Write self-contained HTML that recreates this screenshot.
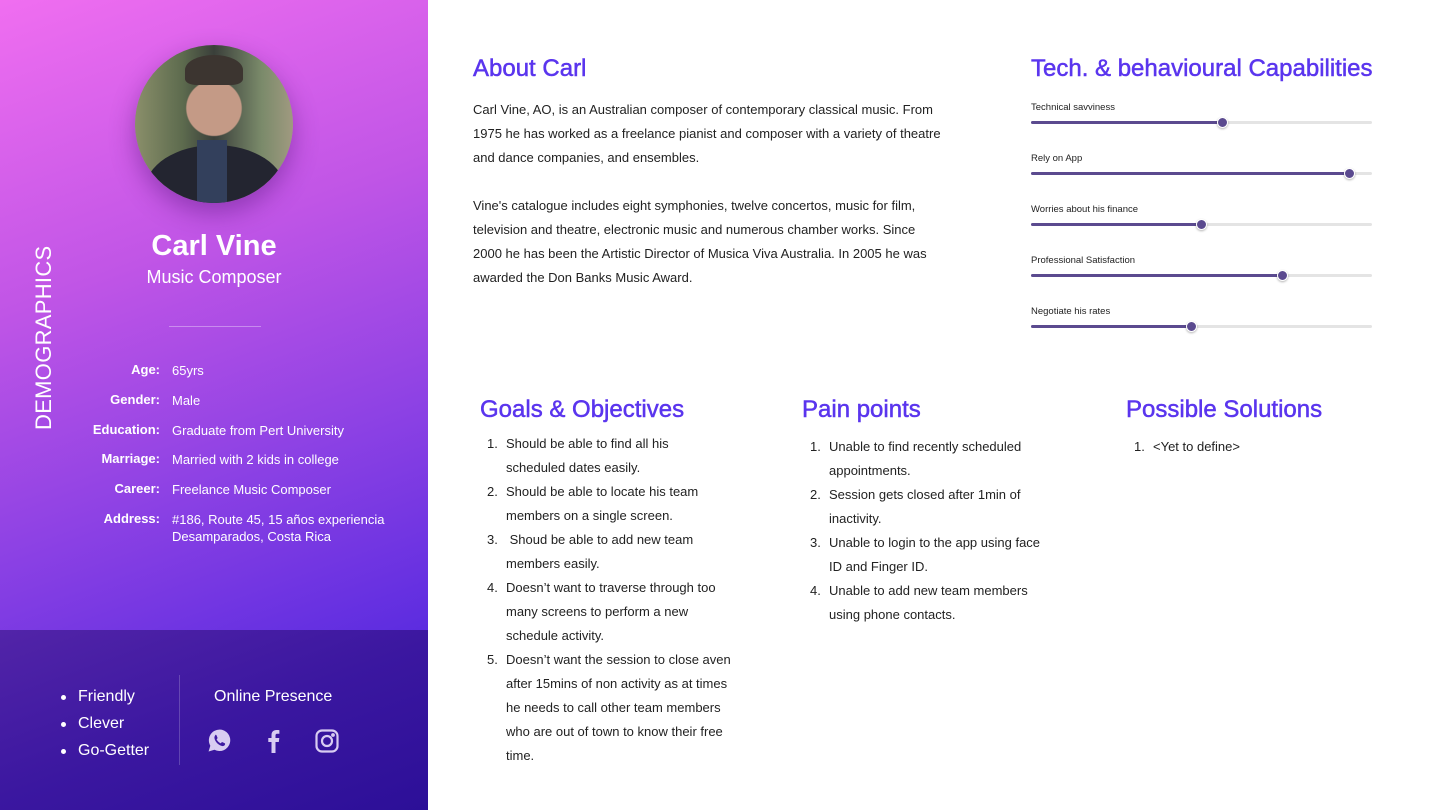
<!DOCTYPE html>
<html><head><meta charset="utf-8"><style>
*{margin:0;padding:0;box-sizing:border-box}
body{width:1440px;height:810px;position:relative;overflow:hidden;background:#fff;font-family:"Liberation Sans",sans-serif;color:#222}
.left{position:absolute;left:0;top:0;width:428px;height:630px;background:linear-gradient(160deg,#f06ef0 0%,#c055e6 40%,#8e42e4 70%,#5c2ce0 100%)}
.bot{position:absolute;left:0;top:630px;width:428px;height:180px;background:linear-gradient(160deg,#5224a8 0%,#3b17a0 50%,#2c0f98 100%)}
.photo{position:absolute;left:135px;top:45px;width:158px;height:158px;border-radius:50%;overflow:hidden;background:radial-gradient(circle at 50% 40%,#c49a86 0 22%,transparent 23%),linear-gradient(90deg,#8a8f6a,#5d6b4e 30%,#3a3f3a 50%,#7a8a6a 80%,#a09a80);box-shadow:0 10px 25px rgba(80,20,120,.45)}
.photo .body{position:absolute;left:10px;top:100px;width:140px;height:90px;border-radius:50% 50% 0 0;background:#232530}
.photo .shirt{position:absolute;left:62px;top:95px;width:30px;height:70px;background:#33405c}
.photo .hair{position:absolute;left:50px;top:10px;width:58px;height:30px;border-radius:50% 50% 20% 20%;background:#3c3530}
.name{position:absolute;left:0;width:428px;top:230px;text-align:center;color:#fff;font-weight:bold;font-size:29px}
.role{position:absolute;left:0;width:428px;top:267px;text-align:center;color:#fff;font-size:18px}
.hr{position:absolute;left:169px;top:326px;width:92px;height:1px;background:rgba(255,255,255,.35)}
.demo{position:absolute;left:31px;top:430px;transform-origin:0 0;transform:rotate(-90deg);color:#fff;font-size:22px;letter-spacing:.3px;white-space:nowrap}
.row{position:absolute;left:60px;font-size:13px;color:#fff}
.row b{display:inline-block;width:100px;text-align:right;margin-right:12px;font-size:13px}
.row span{display:inline-block;vertical-align:top;line-height:17px}
.traits{position:absolute;left:60px;top:688px;color:#fff;font-size:16px;list-style:none}
.traits li{height:27px;position:relative;padding-left:18px}
.traits li:before{content:"";position:absolute;left:1px;top:7px;width:5px;height:5px;border-radius:50%;background:#fff}
.vl{position:absolute;left:179px;top:675px;width:1px;height:90px;background:rgba(255,255,255,.2)}
.op{position:absolute;left:214px;top:688px;color:#fff;font-size:16px}
h2{position:absolute;color:#5a35ee;font-weight:normal;font-size:24px;white-space:nowrap;-webkit-text-stroke:.5px #5a35ee}
p.t{position:absolute;font-size:13px;line-height:24px;color:#222}
ol{position:absolute;font-size:13px;line-height:24px;color:#222;padding-left:0;list-style:none}
ol li{position:relative;padding-left:26px}
ol li i{position:absolute;left:7px;font-style:normal}
.sl{position:absolute;left:1031px;width:341px}
.sl div.l{font-size:9.5px;color:#222}
.sl .tr{position:absolute;top:19px;left:0;width:341px;height:3px;border-radius:2px;background:#e4e4e4}
.sl .f{position:absolute;top:19px;left:0;height:3px;border-radius:2px;background:#5b4a8f}
.sl .k{position:absolute;top:15px;width:11px;height:11px;border-radius:50%;background:#5b4a8f;border:1.5px solid #fff;box-shadow:0 1px 2px rgba(0,0,0,.3);margin-left:-5px}
</style></head><body>
<div class="left"></div>
<div class="photo"><div class="hair"></div><div class="body"></div><div class="shirt"></div></div>
<div class="name">Carl Vine</div>
<div class="role">Music Composer</div>
<div class="hr"></div>
<div class="demo">DEMOGRAPHICS</div>
<div class="row" style="top:362px"><b>Age:</b><span>65yrs</span></div>
<div class="row" style="top:392px"><b>Gender:</b><span>Male</span></div>
<div class="row" style="top:422px"><b>Education:</b><span>Graduate from Pert University</span></div>
<div class="row" style="top:451px"><b>Marriage:</b><span>Married with 2 kids in college</span></div>
<div class="row" style="top:481px"><b>Career:</b><span>Freelance Music Composer</span></div>
<div class="row" style="top:511px"><b>Address:</b><span>#186, Route 45, 15 años experiencia<br>Desamparados, Costa Rica</span></div>
<div class="bot"></div>
<ul class="traits"><li>Friendly</li><li>Clever</li><li>Go-Getter</li></ul>
<div class="vl"></div>
<div class="op">Online Presence</div>
<svg style="position:absolute;left:207px;top:728px" width="25" height="25" viewBox="0 0 24 24"><path fill="#d8ccf2" d="M12 1.5A10.3 10.3 0 0 0 3.2 17L1.5 22.5 7.2 20.9A10.3 10.3 0 1 0 12 1.5z"/><path fill="#3e1aa2" d="M8.2 6.5c.4 0 .7 0 .9.5l1 2.3c.1.3 0 .5-.2.8l-.7.8c.9 1.7 2.3 3 4 3.8l.8-.9c.2-.3.5-.3.8-.2l2.2 1c.4.2.4.5.4.8-.1 1.2-1.2 2.1-2.4 2-3.8-.5-7.5-4.2-7.9-8-.1-1.2.8-2.3 1.1-2.9z"/></svg>
<svg style="position:absolute;left:265px;top:728px" width="16" height="25" viewBox="0 0 16 25"><path fill="#d8ccf2" d="M10.5 25V14h3.3l.5-4h-3.8V7.6c0-1.1.3-1.9 1.9-1.9h2V2.2C14 2.1 12.8 2 11.5 2 8.6 2 6.5 3.8 6.5 7.1V10H3.3v4h3.2v11z"/></svg>
<svg style="position:absolute;left:315px;top:729px" width="24" height="24" viewBox="0 0 24 24" fill="none" stroke="#d8ccf2" stroke-width="2.2"><rect x="1.5" y="1.5" width="21" height="21" rx="5.5"/><circle cx="12" cy="12" r="5"/><circle cx="18" cy="6" r=".8" fill="#d8ccf2"/></svg>

<h2 style="left:473px;top:55px">About Carl</h2>
<p class="t" style="left:473px;top:98px;width:472px">Carl Vine, AO, is an Australian composer of contemporary classical music. From 1975 he has worked as a freelance pianist and composer with a variety of theatre and dance companies, and ensembles.<br><br>Vine's catalogue includes eight symphonies, twelve concertos, music for film, television and theatre, electronic music and numerous chamber works. Since 2000 he has been the Artistic Director of Musica Viva Australia. In 2005 he was awarded the Don Banks Music Award.</p>

<h2 style="left:1031px;top:55px">Tech. &amp; behavioural Capabilities</h2>
<div class="sl" style="top:102px"><div class="l">Technical savviness</div><div class="tr"></div><div class="f" style="width:191px"></div><div class="k" style="left:191px"></div></div>
<div class="sl" style="top:153px"><div class="l">Rely on App</div><div class="tr"></div><div class="f" style="width:318px"></div><div class="k" style="left:318px"></div></div>
<div class="sl" style="top:204px"><div class="l">Worries about his finance</div><div class="tr"></div><div class="f" style="width:170px"></div><div class="k" style="left:170px"></div></div>
<div class="sl" style="top:255px"><div class="l">Professional Satisfaction</div><div class="tr"></div><div class="f" style="width:251px"></div><div class="k" style="left:251px"></div></div>
<div class="sl" style="top:306px"><div class="l">Negotiate his rates</div><div class="tr"></div><div class="f" style="width:160px"></div><div class="k" style="left:160px"></div></div>

<h2 style="left:480px;top:396px">Goals &amp; Objectives</h2>
<ol style="left:480px;top:432px;width:258px">
<li><i>1.</i>Should be able to find all his<br>scheduled dates easily.</li>
<li><i>2.</i>Should be able to locate his team members on a single screen.</li>
<li><i>3.</i>&nbsp;Shoud be able to add new team members easily.</li>
<li><i>4.</i>Doesn’t want to traverse through too many screens to perform a new<br>schedule activity.</li>
<li><i>5.</i>Doesn’t want the session to close aven after 15mins of non activity as at times he needs to call other team members who are out of town to know their free time.</li>
</ol>
<h2 style="left:802px;top:396px">Pain points</h2>
<ol style="left:803px;top:435px;width:250px">
<li><i>1.</i>Unable to find recently scheduled appointments.</li>
<li><i>2.</i>Session gets closed after 1min of inactivity.</li>
<li><i>3.</i>Unable to login to the app using face ID and Finger ID.</li>
<li><i>4.</i>Unable to add new team members using phone contacts.</li>
</ol>
<h2 style="left:1126px;top:396px">Possible Solutions</h2>
<ol style="left:1127px;top:435px;width:250px"><li><i>1.</i>&lt;Yet to define&gt;</li></ol>
</body></html>
